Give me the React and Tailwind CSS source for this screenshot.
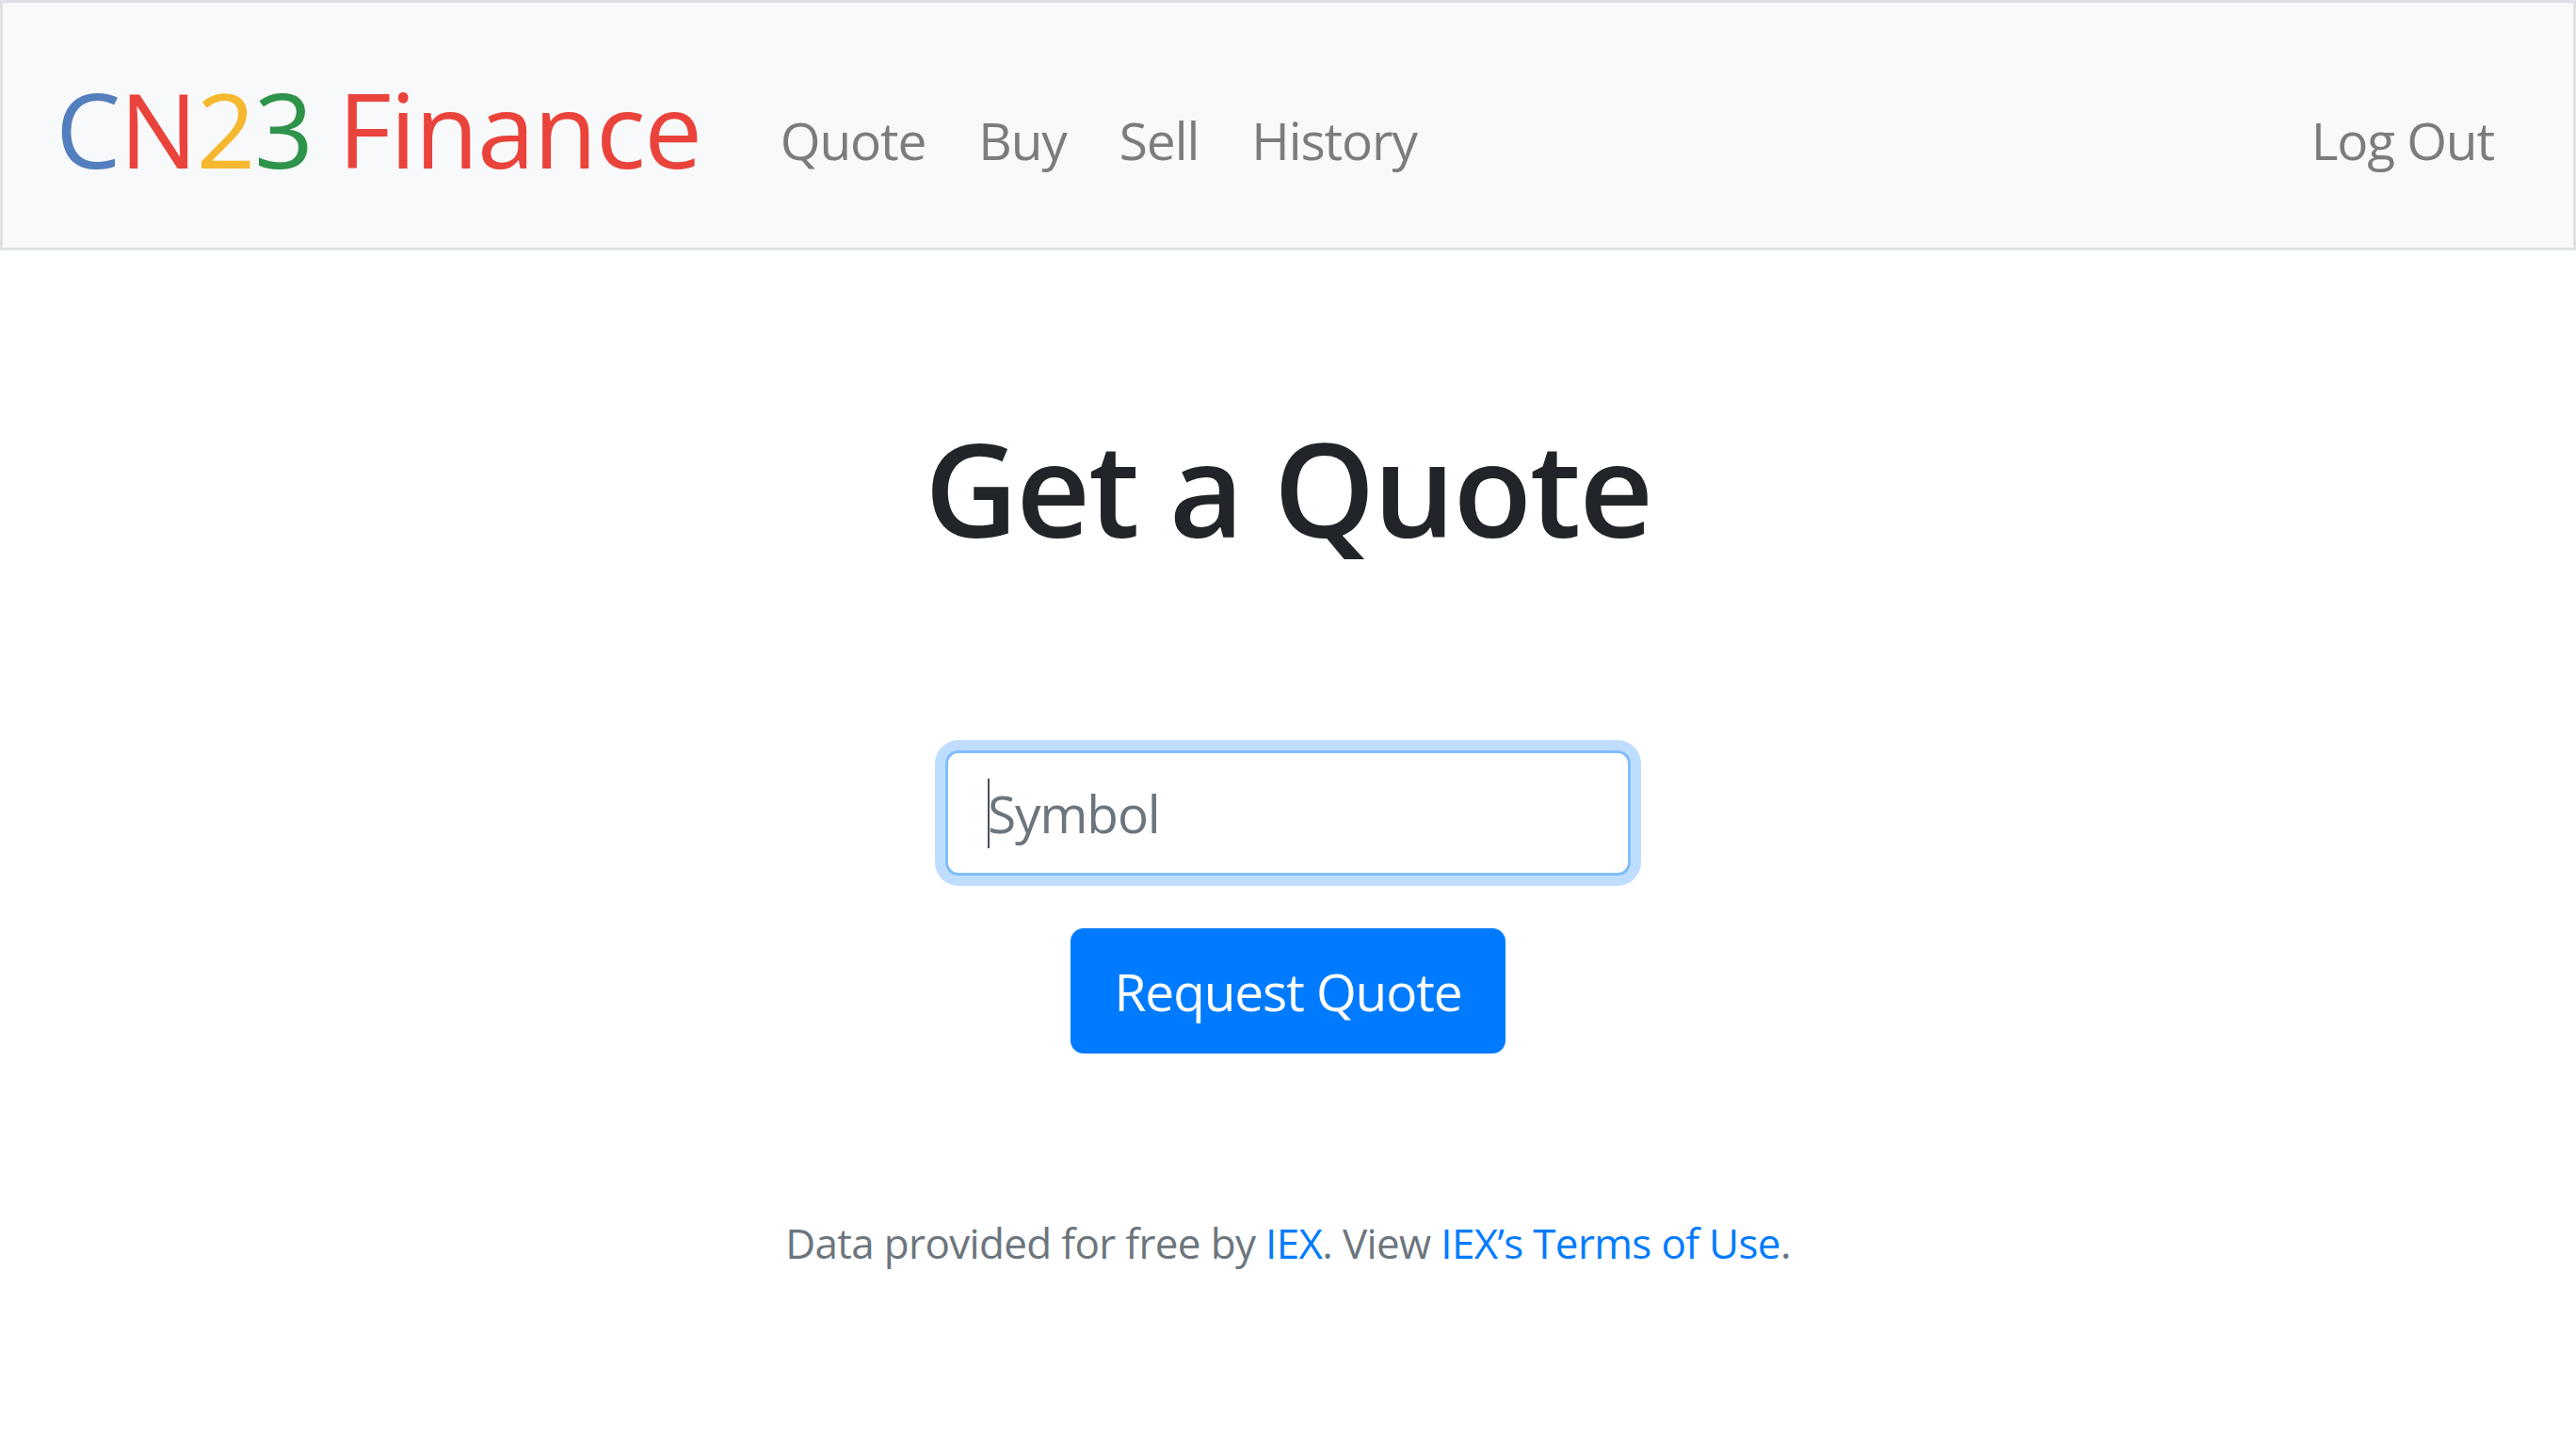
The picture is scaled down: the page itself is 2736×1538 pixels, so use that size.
import React from 'react'

const links = ['Quote', 'Buy', 'Sell', 'History']

export default function App() {
  return (
    <div className="min-h-screen bg-white font-['Open_Sans',sans-serif] text-[#212529]">
      <nav className="flex h-[266px] items-center border-[3px] border-[#dee2e6] bg-[#f8f9fa] px-[56px]">
        <a className="mr-[56px] pt-[20px] pb-[14px] text-[110px] leading-[168px] tracking-[-0.012em]" href="#">
          <span className="text-[#537fbe]">C</span>
          <span className="text-[#ea433b]">N</span>
          <span className="text-[#f5b82e]">2</span>
          <span className="text-[#2e944b]">3</span>
          <span className="text-[#ea433b]"> Finance</span>
        </a>
        <ul className="mt-[32px] flex">
          {links.map(l => (
            <li key={l}>
              <a className="block px-[28px] py-[28px] text-[55px] leading-[84px] tracking-[-0.02em] text-[#7c7c7d]" href="#">
                {l}
              </a>
            </li>
          ))}
        </ul>
        <ul className="ml-auto mt-[32px] flex">
          <li>
            <a className="block px-[28px] py-[28px] text-[55px] leading-[84px] tracking-[-0.02em] text-[#7c7c7d]" href="#">
              Log Out
            </a>
          </li>
        </ul>
      </nav>

      <main className="flex flex-col items-center px-[168px] pt-[168px] text-center">
        <h1 className="mb-[195px] text-[137px] font-semibold leading-[168px] tracking-[-0.015em]">Get a Quote</h1>
        <form className="flex flex-col items-center" onSubmit={e => e.preventDefault()}>
          <div className="relative mb-[56px]">
            <input
              autoComplete="off"
              name="symbol"
              placeholder="Symbol"
              type="text"
              className="block h-[133px] w-[728px] rounded-[14px] border-[3px] border-[#80bdff] bg-white px-[42px] text-[55px] tracking-[-0.02em] text-[#495057] shadow-[0_0_0_11px_rgba(0,123,255,0.25)] outline-none placeholder:text-[#6c757d]"
            />
            <span className="pointer-events-none absolute left-[45px] top-[30px] h-[74px] w-[2px] bg-[#495057]" />
          </div>
          <button className="h-[133px] rounded-[14px] border-[3px] border-[#007bff] bg-[#007bff] px-[44px] text-[55px] leading-[84px] tracking-[-0.02em] text-white">
            Request Quote
          </button>
        </form>
        <footer className="mt-[168px] text-[44px] tracking-[-0.015em] text-[#6c757d]">
          Data provided for free by <a className="text-[#007bff]" href="#">IEX</a>. View{' '}
          <a className="text-[#007bff]" href="#">IEX’s Terms of Use</a>.
        </footer>
      </main>
    </div>
  )
}
